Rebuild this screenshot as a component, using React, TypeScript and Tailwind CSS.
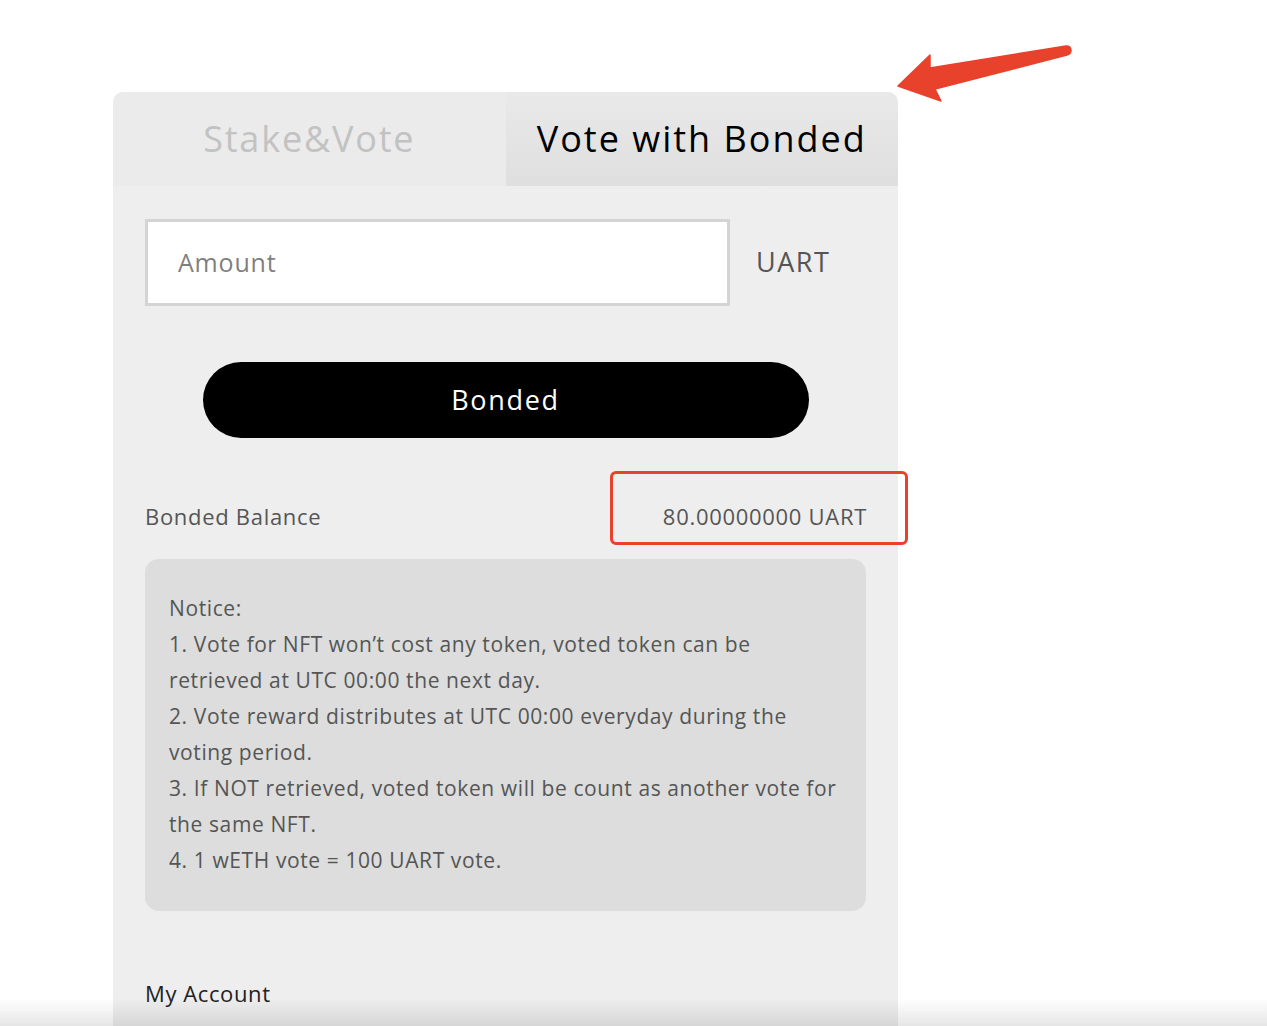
import React from "react";

const font = { fontFamily: '"Open Sans", "Liberation Sans", sans-serif' };

function Arrow() {
  return (
    <svg
      className="absolute left-0 top-0 pointer-events-none"
      width="1267"
      height="200"
      viewBox="0 0 1267 200"
    >
      <path
        d="M898 86 L930 55 L930 68 L1066 46 Q1071 46 1071 50.5 Q1071 54 1067 55 L935 89 L941 101 Z"
        fill="#e8412c"
        stroke="#e8412c"
        strokeWidth="1.5"
        strokeLinejoin="round"
      />
    </svg>
  );
}

export default function App() {
  return (
    <div className="relative h-[1026px] overflow-hidden bg-white" style={font}>
      <Arrow />
      <div className="pt-[92px] pl-[113px]">
        <div className="w-[785px] rounded-t-[10px] overflow-hidden bg-[#eeeeee]">
          <div className="flex h-[94px]">
            <div className="flex-1 flex items-center justify-center bg-[#ebebeb] text-[#c2c2c2] text-[36px] tracking-[1.8px]">
              Stake&amp;Vote
            </div>
            <div className="flex-1 flex items-center justify-center bg-gradient-to-b from-[#e9e9e9] to-[#dfdfdf] text-black text-[36px] tracking-[2px]">
              Vote with Bonded
            </div>
          </div>
          <div className="px-8 pt-[33px] pb-10">
            <div className="flex items-center">
              <div className="w-[585px] h-[87px] border-[3px] border-[#d4d4d4] bg-white flex items-center pl-[30px] text-[25px] tracking-[0.8px] text-[#7f7f7f]">
                Amount
              </div>
              <div className="ml-[26px] text-[27px] tracking-[1.5px] text-[#555]">UART</div>
            </div>
            <div className="mt-[56px] flex justify-center">
              <button className="w-[606px] h-[76px] rounded-full bg-black text-white text-[27px] tracking-[1.7px]">
                Bonded
              </button>
            </div>
            <div className="mt-[64px] flex justify-between items-center text-[22px] tracking-[0.7px] text-[#555] h-[28px]">
              <span>Bonded Balance</span>
              <span className="-mr-[1px]">80.00000000 UART</span>
            </div>
            <div className="mt-[29px] h-[352px] rounded-[14px] bg-[#dcdddc] pl-6 pr-4 pt-[31px] text-[21px] leading-[36px] tracking-[0.6px] text-[#555] whitespace-nowrap">
              <div>Notice:</div>
              <div>1. Vote for NFT won’t cost any token, voted token can be</div>
              <div>retrieved at UTC 00:00 the next day.</div>
              <div>2. Vote reward distributes at UTC 00:00 everyday during the</div>
              <div>voting period.</div>
              <div>3. If NOT retrieved, voted token will be count as another vote for</div>
              <div>the same NFT.</div>
              <div>4. 1 wETH vote = 100 UART vote.</div>
            </div>
            <div className="mt-[66px] text-[22px] tracking-[0.6px] text-[#222]">My Account</div>
          </div>
        </div>
      </div>
      <div className="absolute left-[610px] top-[471px] w-[298px] h-[74px] border-[3px] border-[#e8412c] rounded-[6px] pointer-events-none" />
      <div className="absolute left-0 right-0 bottom-0 h-[28px] bg-gradient-to-b from-transparent to-black/10 pointer-events-none" />
    </div>
  );
}
